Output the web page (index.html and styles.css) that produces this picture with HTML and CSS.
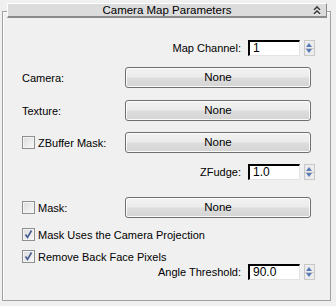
FILE: index.html
```html
<!DOCTYPE html>
<html lang="en">
<head>
  <meta charset="UTF-8" />
  <title>Camera Map Parameters</title>
  <link rel="stylesheet" href="styles.css">
</head>
<body>
  <div class="rollout">
    <div class="rollout-title">
      <span class="title-text">Camera Map Parameters</span>
      <svg class="collapse" width="8" height="11" viewBox="0 0 8 11">
        <path d="M1 5 L4 2 L7 5 M1 9 L4 6 L7 9" fill="none" stroke="#fff" stroke-width="1.6" transform="translate(0,1)"/>
        <path d="M1 5 L4 2 L7 5 M1 9 L4 6 L7 9" fill="none" stroke="#3c3c3c" stroke-width="1.6"/>
      </svg>
    </div>

    <div class="content">
      <div class="row spin-row row-map">
        <span>Map Channel:</span>
        <span class="edit">1</span>
        <span class="spinner"></span>
      </div>

      <div class="row btn-row row-camera">
        <span class="label">Camera:</span>
        <span class="btn">None</span>
      </div>

      <div class="row btn-row row-texture">
        <span class="label">Texture:</span>
        <span class="btn">None</span>
      </div>

      <div class="row btn-row row-zbuffer">
        <span class="label"><span class="check"></span>ZBuffer Mask:</span>
        <span class="btn">None</span>
      </div>

      <div class="row spin-row row-zfudge">
        <span>ZFudge:</span>
        <span class="edit">1.0</span>
        <span class="spinner"></span>
      </div>

      <div class="row btn-row row-mask">
        <span class="label"><span class="check"></span>Mask:</span>
        <span class="btn">None</span>
      </div>

      <div class="row check-row row-uses">
        <span class="check checked"></span>Mask Uses the Camera Projection
      </div>

      <div class="row check-row row-back">
        <span class="check checked"></span>Remove Back Face Pixels
      </div>

      <div class="row spin-row row-angle">
        <span>Angle Threshold:</span>
        <span class="edit">90.0</span>
        <span class="spinner"></span>
      </div>
    </div>
  </div>
</body>
</html>
```

FILE: styles.css
```css
body {
  margin: 0;
  background: #f0f0f0;
  font-family: 'Liberation Sans', Arial, sans-serif;
  font-size: 11px;
  color: #000;
}
.rollout {
  box-sizing: border-box;
  width: 329px;
  height: 290px;
  margin: 11px 0 0 2px;
  border: 1px solid #a0a0a0;
  box-shadow: inset 1px 1px 0 #fff;
}
.rollout-title {
  box-sizing: border-box;
  position: relative;
  width: 320px;
  height: 15px;
  margin: -9px 0 0 4px;
  background: #dcdcdc;
  border-top: 1px solid #fff;
  border-left: 1px solid #fff;
  border-right: 1px solid #8a8a8a;
  border-bottom: 2px solid #8a8a8a;
  text-align: center;
  line-height: 12px;
}
.title-text {
  font-size: 11.5px;
}
.collapse {
  position: absolute;
  right: 5px;
  top: 1px;
}
.content {
  padding: 0 15px 0 19px;
}
.row {
  display: flex;
  align-items: center;
}
.spin-row {
  justify-content: flex-end;
  height: 16px;
}
.spin-row > span:first-child {
  margin-right: 7px;
}
.edit {
  box-sizing: border-box;
  width: 52px;
  height: 16px;
  padding: 0 0 0 3px;
  background: #fff;
  border-top: 2px solid #000;
  border-left: 2px solid #000;
  border-right: 1px solid #e3e3e3;
  border-bottom: 1px solid #e3e3e3;
  line-height: 13px;
  font-size: 12px;
}
.spinner {
  box-sizing: border-box;
  width: 11px;
  height: 16px;
  margin-left: 4px;
  border: 1px solid #c8c8c8;
  background:
    linear-gradient(#c8c8c8, #c8c8c8) center / 100% 1px no-repeat,
    #ececec;
  position: relative;
}
.spinner::before,
.spinner::after {
  content: "";
  position: absolute;
  left: 1px;
  border-left: 3.5px solid transparent;
  border-right: 3.5px solid transparent;
}
.spinner::before {
  top: 2px;
  border-bottom: 4px solid #5a7bb5;
}
.spinner::after {
  bottom: 2px;
  border-top: 4px solid #5a7bb5;
}
.btn-row {
  height: 21px;
}
.label {
  width: 103px;
  display: flex;
  align-items: center;
}
.btn {
  box-sizing: border-box;
  width: 186px;
  height: 21px;
  border: 1px solid #707070;
  border-radius: 3px;
  background: linear-gradient(#f2f2f2 0%, #ebebeb 48%, #dddddd 52%, #d4d4d4 100%);
  box-shadow: inset 0 0 0 1px #fbfbfb;
  text-align: center;
  line-height: 19px;
  font-size: 11.5px;
}
.check {
  box-sizing: border-box;
  display: inline-block;
  width: 13px;
  height: 13px;
  margin-right: 3px;
  border: 1px solid #8e8f8f;
  background: linear-gradient(135deg, #dcdcdc, #f8f8f8);
  box-shadow: inset 0 0 0 1px #f4f4f4;
  flex: none;
}
.check.checked {
  background:
    url("data:image/svg+xml;utf8,<svg xmlns='http://www.w3.org/2000/svg' width='11' height='11'><path d='M2.5 5.5 L4.5 8.5 L8.5 1.5' fill='none' stroke='%234a5f97' stroke-width='1.7'/></svg>") center no-repeat,
    linear-gradient(135deg, #dcdcdc, #f8f8f8);
}
.check-row {
  height: 13px;
}
.row-map { margin-top: 22px; }
.row-camera { margin-top: 11px; }
.row-texture { margin-top: 12px; }
.row-zbuffer { margin-top: 11px; }
.row-zfudge { margin-top: 11px; }
.row-mask { margin-top: 17px; }
.row-uses { margin-top: 10px; }
.row-back { margin-top: 9px; }
.row-angle { margin-top: 1px; }
```
